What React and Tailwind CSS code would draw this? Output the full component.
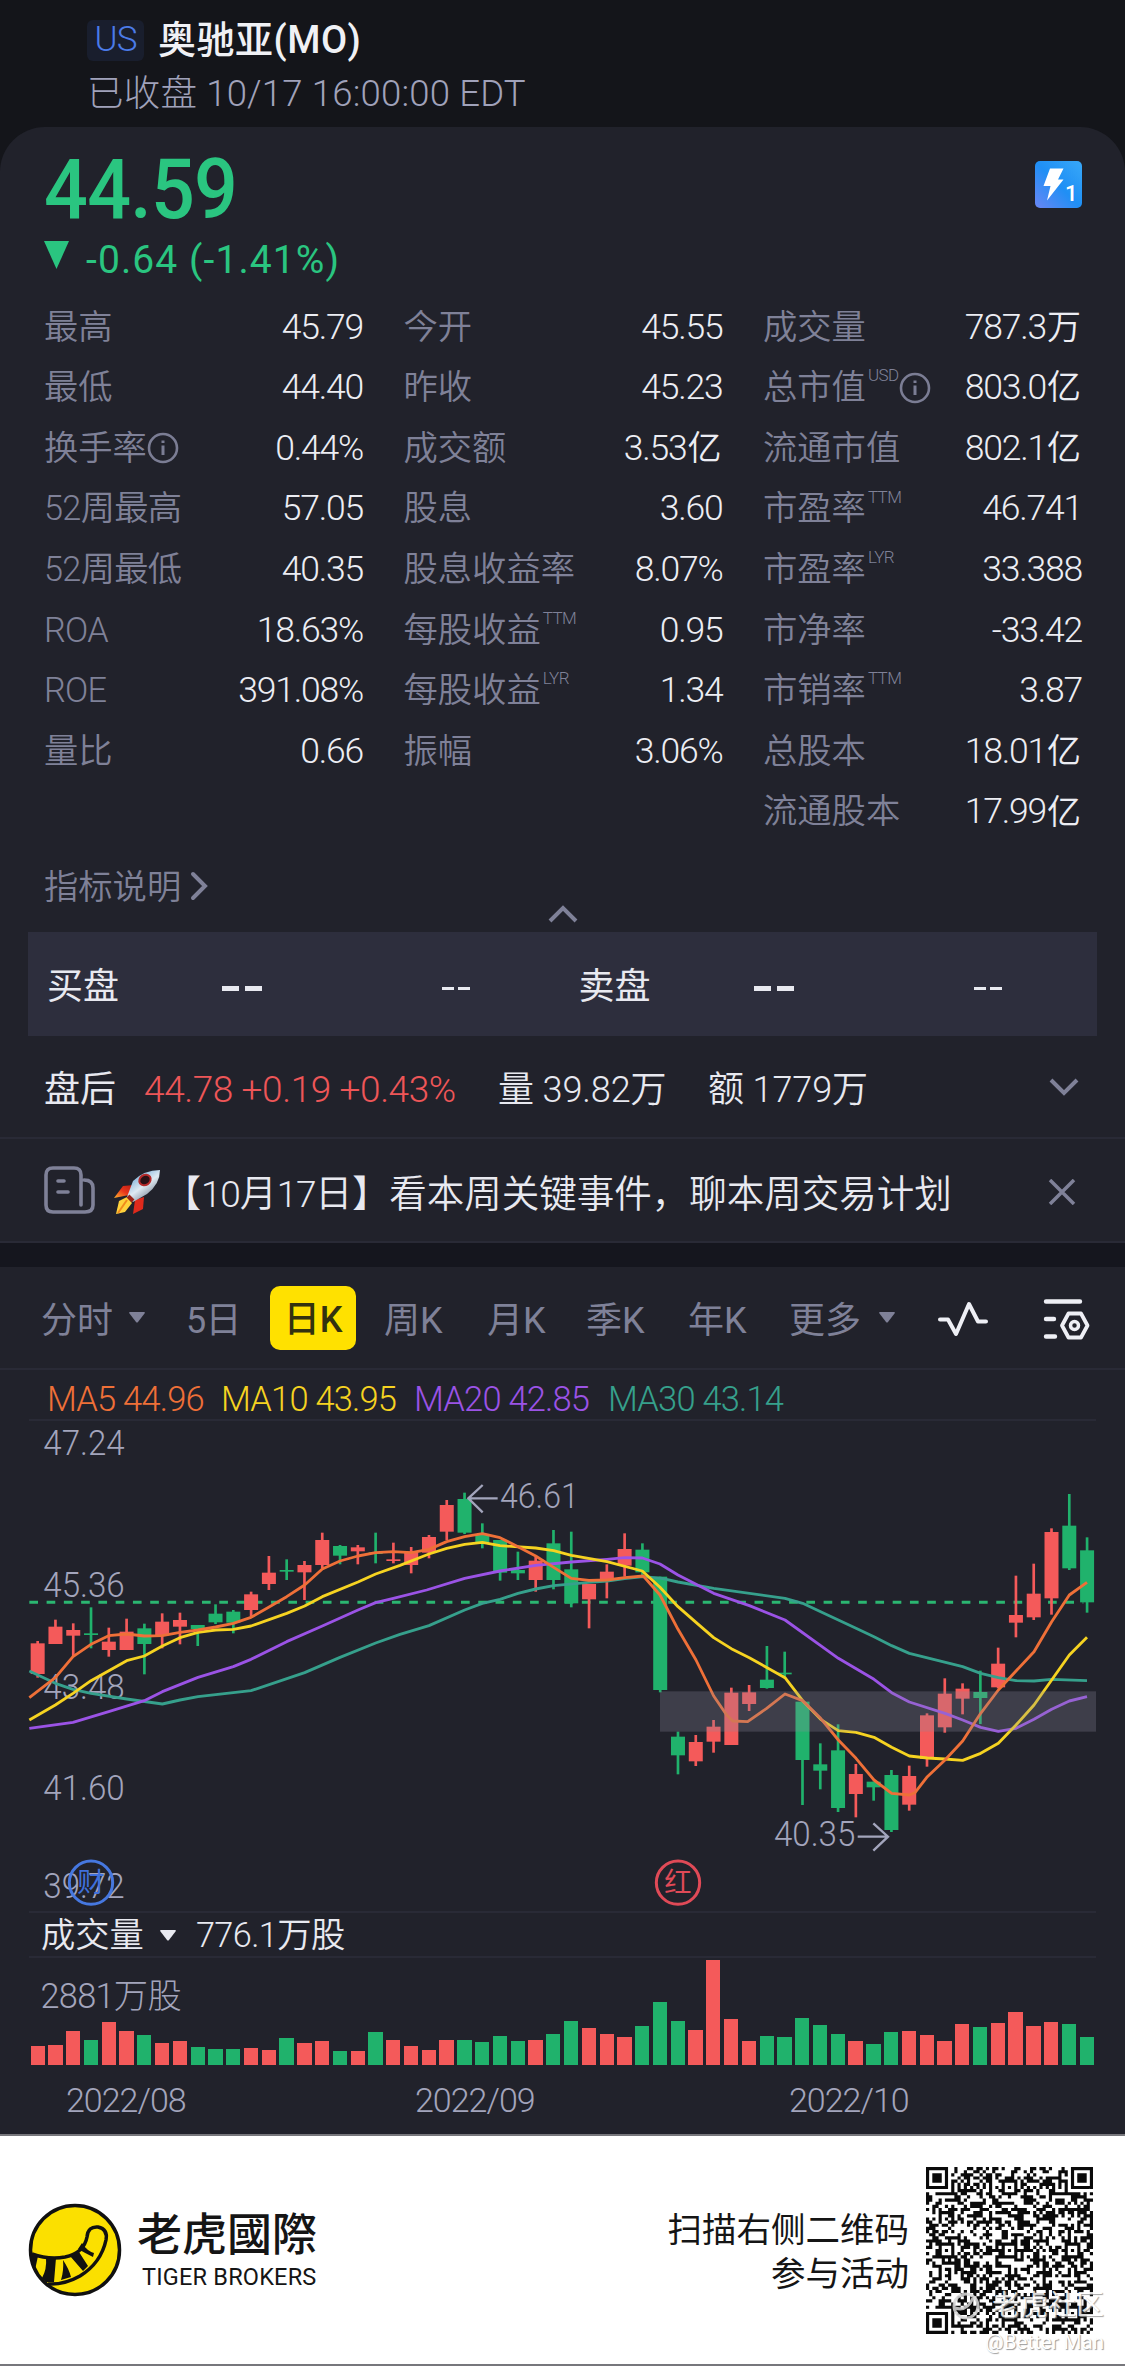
import React from 'react';
import { clsx } from 'clsx';

const STATS = [
  [
    { label: '最高', value: '45.79' },
    { label: '最低', value: '44.40' },
    { label: '换手率', value: '0.44%', info: true },
    { label: '52周最高', value: '57.05' },
    { label: '52周最低', value: '40.35' },
    { label: 'ROA', value: '18.63%' },
    { label: 'ROE', value: '391.08%' },
    { label: '量比', value: '0.66' }
  ],
  [
    { label: '今开', value: '45.55' },
    { label: '昨收', value: '45.23' },
    { label: '成交额', value: '3.53', unit: '亿' },
    { label: '股息', value: '3.60' },
    { label: '股息收益率', value: '8.07%' },
    { label: '每股收益', sup: 'TTM', value: '0.95' },
    { label: '每股收益', sup: 'LYR', value: '1.34' },
    { label: '振幅', value: '3.06%' }
  ],
  [
    { label: '成交量', value: '787.3', unit: '万' },
    { label: '总市值', sup: 'USD', value: '803.0', unit: '亿', info: true },
    { label: '流通市值', value: '802.1', unit: '亿' },
    { label: '市盈率', sup: 'TTM', value: '46.741' },
    { label: '市盈率', sup: 'LYR', value: '33.388' },
    { label: '市净率', value: '-33.42' },
    { label: '市销率', sup: 'TTM', value: '3.87' },
    { label: '总股本', value: '18.01', unit: '亿' },
    { label: '流通股本', value: '17.99', unit: '亿' }
  ]
];

// [up, high, body top, body bottom, low, volume height], in plot units
const CANDLES = [
  [1, 783, 790, 882, 893, 59], [1, 719, 740, 792, 792, 62], [1, 730, 750, 767, 830, 102],
  [0, 682, 760, 765, 805, 77], [1, 743, 785, 810, 830, 130], [1, 716, 755, 810, 810, 104],
  [0, 731, 745, 792, 883, 92], [1, 700, 725, 765, 805, 68], [1, 698, 720, 740, 793, 72],
  [0, 735, 735, 747, 798, 54], [0, 673, 701, 727, 732, 50], [0, 690, 695, 728, 760, 48],
  [1, 635, 643, 690, 710, 53], [1, 528, 578, 612, 630, 47], [0, 538, 570, 575, 600, 81],
  [1, 543, 555, 577, 660, 68], [1, 458, 480, 555, 565, 72], [0, 495, 498, 527, 553, 44],
  [1, 495, 502, 514, 553, 42], [0, 458, 517, 522, 550, 100], [1, 488, 538, 543, 550, 77],
  [1, 501, 515, 555, 580, 59], [1, 465, 471, 518, 535, 47], [1, 360, 375, 455, 480, 76],
  [0, 338, 357, 458, 462, 76], [0, 430, 465, 487, 505, 69], [0, 480, 480, 578, 602, 88],
  [0, 515, 570, 580, 600, 73], [1, 530, 542, 600, 635, 76], [0, 450, 490, 600, 628, 94],
  [0, 455, 568, 670, 682, 132], [1, 612, 612, 658, 745, 113], [1, 553, 575, 603, 655, 95],
  [1, 460, 507, 557, 590, 86], [0, 490, 509, 577, 588, 118], [0, 590, 590, 930, 937, 190],
  [0, 1055, 1070, 1126, 1183, 132], [1, 1065, 1086, 1144, 1158, 107], [1, 1020, 1040, 1085, 1118, 315],
  [1, 923, 938, 1095, 1095, 139], [1, 915, 937, 972, 993, 72], [0, 798, 899, 924, 926, 87],
  [0, 815, 878, 883, 895, 84], [0, 965, 965, 1140, 1275, 142], [0, 1090, 1153, 1172, 1228, 120],
  [0, 1033, 1111, 1284, 1296, 94], [1, 1152, 1182, 1242, 1312, 73], [0, 1205, 1205, 1222, 1262, 64],
  [0, 1170, 1185, 1350, 1356, 100], [1, 1157, 1188, 1274, 1292, 103], [1, 1000, 1006, 1137, 1160, 92],
  [1, 895, 941, 1042, 1058, 72], [1, 910, 926, 956, 1003, 123], [0, 872, 936, 954, 1032, 115],
  [1, 803, 851, 922, 925, 126], [1, 587, 705, 728, 772, 159], [1, 551, 641, 712, 720, 119],
  [1, 445, 456, 655, 704, 130], [0, 342, 437, 565, 570, 124], [0, 472, 511, 667, 698, 86]
];

const AVERAGES = [
  {
    color: '#36a08c',
    points:
      '88,873 166,910 219,928 273,940 380,957 487,972 540,960 594,950 753,932 914,878 1020,832 1127,789 1200,763 1287,737 1394,690 1447,670 1500,658 1554,640 1607,627 1661,617 1767,607 1821,603 1874,596 1930,590 1985,595 2034,606 2141,625 2355,655 2408,670 2462,695 2568,745 2622,770 2675,797 2728,820 2888,860 2942,880 2995,893 3048,902 3102,903 3155,898 3261,902'
  },
  {
    color: '#9b53e6',
    points:
      '88,1045 219,1027 326,995 433,962 487,935 594,892 700,860 753,838 860,785 967,738 1074,690 1127,668 1180,655 1280,630 1394,595 1500,573 1607,556 1714,546 1821,538 1874,533 1927,534 1980,552 2034,585 2141,640 2248,677 2355,720 2462,797 2515,835 2622,898 2675,938 2728,966 2835,1000 2888,1020 2942,1042 2995,1054 3048,1045 3102,1018 3155,988 3208,963 3261,950'
  },
  {
    color: '#f6d321',
    points:
      '88,1020 166,975 219,940 273,902 380,842 433,828 487,798 540,773 594,757 647,750 700,748 753,738 860,700 914,678 967,650 1074,606 1127,582 1200,556 1287,522 1340,505 1394,493 1447,487 1500,497 1607,504 1661,512 1714,526 1821,545 1927,573 1980,622 2034,680 2088,727 2141,773 2194,806 2248,833 2355,893 2408,962 2462,1018 2515,1052 2568,1057 2622,1072 2675,1102 2728,1128 2782,1134 2835,1137 2888,1141 2942,1120 2995,1090 3048,1035 3102,975 3155,900 3208,825 3261,772'
  },
  {
    color: '#ef7038',
    points:
      '88,953 166,893 219,830 273,793 326,767 380,762 433,768 487,767 540,757 594,750 647,741 700,730 753,712 806,682 860,650 914,615 967,567 1020,543 1074,528 1127,518 1180,515 1234,518 1287,508 1340,485 1394,470 1447,461 1500,473 1554,500 1607,528 1661,562 1714,595 1767,601 1821,600 1874,593 1930,588 1980,645 2034,748 2088,840 2141,948 2180,1005 2198,1023 2243,1025 2300,985 2355,942 2408,962 2462,1015 2515,1080 2568,1135 2622,1200 2675,1240 2728,1245 2745,1238 2782,1190 2835,1140 2888,1083 2942,1000 2995,930 3048,873 3102,815 3155,725 3208,645 3261,607'
  }
];

const PRICE_AXIS = [
  { text: '47.24', y: 225 },
  { text: '45.36', y: 652 },
  { text: '43.48', y: 958 },
  { text: '41.60', y: 1260 },
  { text: '39.72', y: 1555 }
];

const InfoIcon = () => (
  <svg className="h-8 w-8" viewBox="0 0 32 32" fill="none" stroke="#7b7d94" strokeWidth="2.6">
    <circle cx="16" cy="16" r="14" />
    <path d="M16 13.5V23M16 8.5V11" strokeWidth="3" />
  </svg>
);

const StatRow = ({ label, sup, info, value, unit }) => (
  <div className="flex h-[60.6px] items-center justify-between whitespace-nowrap">
    <div className="flex items-center text-[34.3px] font-light text-[#7f8198]">
      <span className={clsx('font-[350]', /^\w/.test(label) && 'tracking-[-0.7px]')}>{label}</span>
      {sup && <span className="-mt-6 ml-0.5 text-[17px] leading-none tracking-[-0.6px]">{sup}</span>}
      {info && <InfoIcon />}
    </div>
    <div className="flex items-center text-[35.500px] font-[350] text-[#ecedf3]">
      <span className={clsx('tracking-[-1.2px]', !unit && '-mr-px')}>{value}</span>
      {unit && <span className="ml-px text-[34px]">{unit}</span>}
    </div>
  </div>
);

const Header = () => (
  <header className="h-[127px] bg-[#14151a] pl-[87px] pt-[13px]">
    <div className="flex h-[52px] items-center">
      <span className="mt-0.5 flex h-[41px] w-[57px] items-center justify-center rounded-md bg-[#191e2d] text-[35px] font-[350] tracking-[-1px] text-[#4b7be8]">
        US
      </span>
      <h1 className="ml-[14px] mt-[3px] text-[38px] font-medium tracking-[0.5px] text-[#f0f1f5]">奥驰亚(MO)</h1>
    </div>
    <p className="flex h-[54px] items-center pt-[5px] text-[36.5px] font-light tracking-[0.2px] text-[#a0a2ba]">
      已收盘 10/17 16:00:00 EDT
    </p>
  </header>
);

const FlashIcon = () => (
  <svg className="h-[47px] w-[47px]" viewBox="0 0 47 47">
    <defs>
      <linearGradient id="flash" x1="0" y1="1" x2="1" y2="0">
        <stop offset="0" stopColor="#6a86f5" />
        <stop offset="0.5" stopColor="#1f8ff5" />
        <stop offset="1" stopColor="#38a8f8" />
      </linearGradient>
    </defs>
    <rect width="47" height="47" rx="5" fill="url(#flash)" />
    <path d="M15 7.5h13.5L23 18.5h5.5L12 39.5l3.5-14.5H8.5z" fill="#fff" />
    <text x="30" y="40" fontSize="22" fontWeight="500" fill="#fff">1</text>
  </svg>
);

const Quote = () => (
  <section className="px-[44px]">
    <div className="flex items-start justify-between pt-[28px]">
      <div className="mt-0.5 h-[92px] origin-left scale-x-[0.93] whitespace-nowrap text-[83px] font-medium leading-[66px] tracking-[-0.8px] text-[#2ac580]">
        44.59
      </div>
      <div className="mt-[6px] -mr-px">
        <FlashIcon />
      </div>
    </div>
    <div className="-mt-[7px] flex h-[34px] items-center text-[#2ac580]">
      <svg className="-mt-2 h-7 w-[25px]" viewBox="0 0 25 28">
        <path d="M0 0h25L12.500 28z" fill="currentColor" />
      </svg>
      <span className="ml-[17px] mt-0.5 text-[39px] tracking-[1.1px]">-0.64 (-1.41%)</span>
    </div>
    <div className="mt-[21px] grid grid-cols-[318px_318px_318px] gap-x-[41.500px]">
      {STATS.map((column, i) => (
        <div key={i}>
          {column.map((row, j) => (
            <StatRow key={j} {...row} />
          ))}
        </div>
      ))}
    </div>
    <div className="mt-[19px] flex h-[52px] items-center text-[34.3px] font-[350] text-[#7f8198]">
      指标说明
      <svg className="-mt-0.5 ml-2 h-8 w-5" viewBox="0 0 20 32" fill="none" stroke="currentColor" strokeWidth="4" strokeLinecap="round">
        <path d="M4 4l12 12L4 28" />
      </svg>
    </div>
    <svg className="mx-auto -mt-[8px] h-[18px] w-[30px]" viewBox="0 0 30 18" fill="none" stroke="#7f8198" strokeWidth="4">
      <path d="M2 16L15 3l13 13" />
    </svg>
  </section>
);

const Dash = ({ bold }) => (
  <span className={clsx('flex', bold ? 'gap-1.5' : 'gap-1')}>
    <i className={clsx('bg-[#e8e9f0]', bold ? 'h-[5px] w-[17px]' : 'h-[3px] w-[12px]')} />
    <i className={clsx('bg-[#e8e9f0]', bold ? 'h-[5px] w-[17px]' : 'h-[3px] w-[12px]')} />
  </span>
);

const BidAsk = () => (
  <section className="mx-[28px] mt-[9px] grid h-[104px] grid-cols-[531.5px_1fr] bg-[#2d2e3d] pl-[19px] text-[36px] text-[#e8e9f0]">
    {['买盘', '卖盘'].map((side) => (
      <div key={side} className="flex items-center">
        <span className="mt-[5px] w-[175px]">{side}</span>
        <span className="mt-2 w-[220px]">
          <Dash bold />
        </span>
        <span className="mt-2">
          <Dash />
        </span>
      </div>
    ))}
  </section>
);

const AfterHours = () => (
  <section className="flex h-[103px] items-center border-b-2 border-[#292a36] px-[44px] pt-[6px] text-[36px] text-[#e8e9f0]">
    <span>盘后</span>
    <span className="ml-[28px] w-[326px] text-[37px] font-light tracking-[-0.4px] text-[#ee5658]">44.78 +0.19 +0.43%</span>
    <span className="ml-[28px] w-[182px] font-[350] tracking-[-0.1px]">量 39.82万</span>
    <span className="ml-[28px] font-[350] tracking-[-0.1px]">额 1779万</span>
    <svg className="-mt-1.5 ml-auto mr-[2px] h-[18px] w-[30px]" viewBox="0 0 30 18" fill="none" stroke="#7f8198" strokeWidth="4">
      <path d="M2 2l13 13L28 2" />
    </svg>
  </section>
);

const Rocket = () => (
  <svg className="h-[46px] w-[48px]" viewBox="0 0 48 46">
    <defs>
      <linearGradient id="hull" x1="0.2" y1="0.1" x2="0.8" y2="0.9">
        <stop offset="0" stopColor="#6fa9d6" />
        <stop offset="0.5" stopColor="#dfeaf2" />
        <stop offset="1" stopColor="#6f7b8c" />
      </linearGradient>
      <linearGradient id="fin" x1="0" y1="1" x2="1" y2="0">
        <stop offset="0" stopColor="#ffb52e" />
        <stop offset="0.5" stopColor="#e8361c" />
        <stop offset="1" stopColor="#b81c14" />
      </linearGradient>
    </defs>
    <path d="M1 29L10 17l11-1-5 10z" fill="url(#fin)" />
    <path d="M20 45l10-5 1-12-9 3z" fill="#df2a1c" />
    <path d="M3 45l3-13 8-4 5 6-7 9z" fill="#ffd23c" />
    <path d="M5 44l9-13" stroke="#f08a1c" strokeWidth="2" />
    <path d="M14 28L20 12Q31 1 47 1q0 14-13 24l-14 8z" fill="url(#hull)" />
    <path d="M15 27l5 5" stroke="#9a2418" strokeWidth="4" />
    <ellipse cx="32" cy="11" rx="6" ry="5" fill="#2a1116" stroke="#b52a2a" strokeWidth="2" transform="rotate(-35 32 11)" />
  </svg>
);

const News = () => (
  <section className="flex h-[104px] items-center whitespace-nowrap border-b-2 border-[#292a36] pl-[44px] pr-[49px] pt-[4px] text-[#e8e9f0]">
    <svg className="-mt-1 h-[49px] w-[52px]" viewBox="0 0 52 49" fill="none" stroke="#7f8198" strokeWidth="3.600" strokeLinecap="round">
      <path d="M37 39V9q0-7-7-7H9Q2 2 2 9v30q0 7 7 7h32q8 0 8-7V22q0-8-9-8" />
      <path d="M14 15h6M14 26h10" />
    </svg>
    <span className="ml-[17px]">
      <Rocket />
    </span>
    <span className="ml-[3px] mt-1 text-[37px] font-[350]">
      【<span className="tracking-[-1.2px]">10</span>月<span className="tracking-[-1.2px]">17</span>日】
    </span>
    <span className="mt-1 text-[37.500px] font-[350]">看本周关键事件，聊本周交易计划</span>
    <svg className="ml-auto h-[26px] w-[28px]" viewBox="0 0 28 26" fill="none" stroke="#7f8198" strokeWidth="3.500">
      <path d="M2 1l24 24M26 1L2 25" />
    </svg>
  </section>
);

const Caret = ({ className }) => (
  <svg className={clsx('h-[11px] w-4', className)} viewBox="0 0 16 11">
    <path d="M1 0h14q1.500 0 .5 1.500L9 10q-1 1.200-2 0L.5 1.500Q-.5 0 1 0z" fill="currentColor" />
  </svg>
);

const Tabs = () => (
  <nav className="flex h-[103px] items-center whitespace-nowrap border-b-2 border-[#292a36] pl-[41px] text-[36px] text-[#7f8198]">
    <span className="mt-[6px] w-[88px]">分时</span>
    <Caret className="mr-[41px]" />
    <span className="mt-[6px] w-[84px] tracking-[-0.7px]">5日</span>
    <span className="flex h-[64px] w-[86px] items-center justify-center rounded-[10px] bg-[#ffe100] pt-[5px] font-medium text-[#33320f]">
      日K
    </span>
    <span className="ml-[28px] mt-[6px] w-[103px]">周K</span>
    <span className="mt-[6px] w-[99px]">月K</span>
    <span className="mt-[6px] w-[102px]">季K</span>
    <span className="mt-[6px] w-[101px]">年K</span>
    <span className="mt-[6px] w-[90px]">更多</span>
    <Caret />
    <svg className="ml-[42px] mt-0.5 h-9 w-[52px]" viewBox="0 0 52 36" fill="none" stroke="#eeeff5" strokeWidth="4" strokeLinecap="round" strokeLinejoin="round">
      <path d="M3 18.500h8L19 33 32 3l9 17.500h8" />
    </svg>
    <svg className="ml-[54px] mt-0.5 h-[44px] w-[47px]" viewBox="0 0 47 44" fill="none" stroke="#eeeff5" strokeWidth="4.400" strokeLinecap="round" strokeLinejoin="round">
      <path d="M3 4.500h34M3 22h8M3 39.500h9" />
      <path d="M25.500 16.500h12.500l6.500 12-6.500 12H25.500L19 28.500z" strokeWidth="3.800" />
      <circle cx="31.500" cy="28.500" r="4" strokeWidth="3.500" />
    </svg>
  </nav>
);

const Legend = () => (
  <div className="mx-[29px] flex h-[51px] items-center whitespace-nowrap border-b-2 border-[#292a36] pl-[18px] pt-[11px] text-[34.500px] font-light tracking-[-0.8px]">
    <span className="w-[174px] text-[#ef7038]">MA5 44.96</span>
    <span className="w-[193px] text-[#f6d321]">MA10 43.95</span>
    <span className="w-[194px] text-[#9b53e6]">MA20 42.85</span>
    <span className="text-[#36a08c]">MA30 43.14</span>
  </div>
);

// The plot is drawn on a grid of three units to the pixel
const PriceChart = () => (
  <svg className="block h-[490px] w-[1125px]" viewBox="0 123 3375 1470" fill="none">
    <g fill="#a3a5bc" fontSize="104" fontWeight="300">
      {PRICE_AXIS.map((p) => (
        <text key={p.text} x="130" y={p.y} textLength="244" lengthAdjust="spacingAndGlyphs">
          {p.text}
        </text>
      ))}
    </g>
    <line x1="88" x2="3250" y1="667" y2="667" stroke="#2bb671" strokeWidth="9" strokeDasharray="26 25.800" />
    {CANDLES.map(([up, high, top, bottom, low], i) => {
      const x = 113 + i * 53.36;
      return (
        <g key={i} fill={up ? '#f45a5a' : '#20b26c'}>
          <rect x={x - 4} y={high} width="8" height={low - high} />
          <rect x={x - 21} y={top} width="42" height={bottom - top} />
        </g>
      );
    })}
    {AVERAGES.map((line) => (
      <polyline key={line.color} points={line.points} stroke={line.color} strokeWidth="8.500" strokeLinejoin="round" />
    ))}
    <rect x="1980" y="934" width="1308" height="121" fill="#8b8c9f" fillOpacity="0.27" />
    <g stroke="#a3a5bc" strokeWidth="7">
      <path d="M1493 355H1405M1448 315l-43 40 43 42" />
      <path d="M2573 1370h91M2620 1330l44 40-44 42" />
    </g>
    <g fill="#a3a5bc" fontSize="104" fontWeight="300">
      <text x="1500" y="383" textLength="236" lengthAdjust="spacingAndGlyphs">46.61</text>
      <text x="2322" y="1398" textLength="244" lengthAdjust="spacingAndGlyphs">40.35</text>
    </g>
    <g textAnchor="middle" fontSize="82">
      <circle cx="273" cy="1508" r="65" stroke="#4678e0" strokeWidth="9" />
      <text x="273" y="1537" fill="#3f70dc">财</text>
      <circle cx="2034" cy="1508" r="65" stroke="#e04a57" strokeWidth="9" />
      <text x="2034" y="1537" fill="#e04a57">红</text>
    </g>
  </svg>
);

const Volume = () => (
  <section>
    <div className="mx-[29px] flex h-[47px] items-center whitespace-nowrap border-y-2 border-[#292a36] pl-[12px] pt-0.5 text-[34.3px] font-[350] text-[#e8e9f0]">
      成交量
      <Caret className="ml-[16px] mr-[20px]" />
      <span className="tracking-[-0.6px]">776.1万股</span>
    </div>
    <div className="relative mx-[30.500px] flex h-[107px] items-end justify-between">
      <span className="absolute left-[10px] top-[13px] text-[34.3px] font-light tracking-[-0.7px] text-[#a3a5bc]">
        2881万股
      </span>
      {CANDLES.map((c, i) => (
        <div
          key={i}
          className={clsx('w-[14.300px]', c[0] ? 'bg-[#f45a5a]' : 'bg-[#20b26c]')}
          style={{ height: c[5] / 3 }}
        />
      ))}
    </div>
    <div className="flex h-[69px] items-center pl-[66px] pt-0.5 text-[34px] font-light tracking-[-1px] text-[#a3a5bc]">
      <span className="w-[349px]">2022/08</span>
      <span className="w-[374px]">2022/09</span>
      <span>2022/10</span>
    </div>
  </section>
);

const Logo = () => (
  <svg className="h-[94px] w-[94px]" viewBox="0 0 94 94">
    <circle cx="47" cy="47" r="44.500" fill="#fbe000" stroke="#111" strokeWidth="3.500" />
    <path
      d="M4 51q17 6 33 3 19-4 22-20 1-11 11-10 10 2 8 13-5 23-26 36-16 9-32 8"
      fill="none"
      stroke="#111"
      strokeWidth="3.500"
    />
    <path d="M2 49l8 4-3 14q-5-8-5-18zM18 55h10l-2 24h-8l-4-4q5-9 4-20zM35 57q6 9 8 17l-10 3q3-10 2-20zM42 53l9-4 9 14-5 5zM54 40q5 8 12 10l-1 4q-8-4-15-8z" fill="#111" />
  </svg>
);

const QR_SIZE = 53;
const ALIGN = [6, 26, 46];

const ring = (dx, dy, dark) => dark.includes(Math.max(Math.abs(dx), Math.abs(dy)));

const qrModule = (x, y) => {
  for (const [fx, fy] of [[3, 3], [49, 3], [3, 49]]) {
    if (Math.abs(x - fx) <= 4 && Math.abs(y - fy) <= 4) return ring(x - fx, y - fy, [0, 1, 3]);
  }
  for (const ax of ALIGN) {
    for (const ay of ALIGN) {
      if (Math.abs(x - ax) <= 2 && Math.abs(y - ay) <= 2) return ring(x - ax, y - ay, [0, 2]);
    }
  }
  if (x === 6 || y === 6) return (x + y) % 2 === 0;
  let h = (x * 374761393 + y * 668265263) | 0;
  h = Math.imul(h ^ (h >>> 13), 1274126177);
  return ((h ^ (h >>> 16)) & 255) < 128;
};

const QrCode = () => {
  let d = '';
  for (let y = 0; y < QR_SIZE; y++) {
    for (let x = 0; x < QR_SIZE; x++) {
      if (qrModule(x, y)) d += `M${x} ${y}h1v1h-1z`;
    }
  }
  return (
    <svg className="h-[167px] w-[167px]" viewBox="0 0 53 53">
      <path d={d} fill="#0a0a0a" />
    </svg>
  );
};

const Footer = () => (
  <footer className="relative flex h-[232px] items-center border-y-2 border-[#77777c] bg-white pl-[28px] text-[#151515]">
    <Logo />
    <div className="ml-[15px] mt-[3px] w-[183px] whitespace-nowrap">
      <div className="text-[45px] font-medium leading-[50px]">老虎國際</div>
      <div className="ml-[5px] mt-px text-[23.500px] leading-[30px] tracking-[0.2px]">TIGER BROKERS</div>
    </div>
    <div className="ml-auto mt-1 whitespace-nowrap text-right text-[34.500px] leading-[44px]">
      <div>扫描右侧二维码</div>
      <div>参与活动</div>
    </div>
    <div className="ml-[17px] mr-[32px]">
      <QrCode />
    </div>
    {/* Watermark over the code */}
    <div className="absolute bottom-[9px] right-[21px] flex flex-col items-end whitespace-nowrap text-white [text-shadow:1px_1px_1px_#999]">
      <div className="flex items-center text-[28px] leading-[38px] opacity-85">
        <svg className="mr-3 h-7 w-7" viewBox="0 0 28 28" fill="none" stroke="#d8d8d8" strokeWidth="3">
          <circle cx="14" cy="14" r="12" />
          <path d="M3 16q12 4 18-10" />
        </svg>
        老虎社区
      </div>
      <div className="mt-1 text-[20.500px] leading-[26px]">@Better Man</div>
    </div>
  </footer>
);

const App = () => (
  <div className="w-[1125px] overflow-hidden bg-[#14151a] font-['Roboto','Noto_Sans_CJK_SC',sans-serif]">
    <Header />
    <main className="rounded-t-[45px] bg-[#21222b]">
      <Quote />
      <BidAsk />
      <AfterHours />
      <News />
      <div className="h-6 bg-[#15161e]" />
      <Tabs />
      <Legend />
      <PriceChart />
      <Volume />
    </main>
    <Footer />
  </div>
);

export default App;
